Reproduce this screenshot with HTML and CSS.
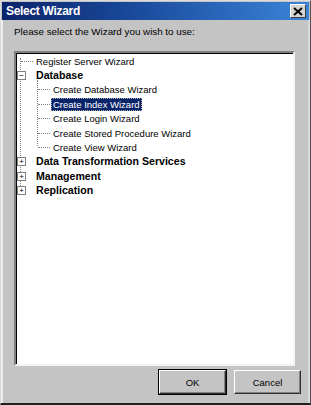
FILE: index.html
```html
<!DOCTYPE html>
<html>
<head>
<meta charset="utf-8">
<link rel="stylesheet" href="styles.css">
</head>
<body>
<div class="window">
  <div class="titlebar">
    <span class="title">Select Wizard</span>
    <span class="close"><svg width="10" height="9" viewBox="0 0 10 9"><path d="M1 1 L9 8 M9 1 L1 8" stroke="#000" stroke-width="2"/></svg></span>
  </div>
  <div class="body">
    <div class="prompt">Please select the Wizard you wish to use:</div>
    <div class="tree">
      <span class="vline root"></span>
      <span class="vline kids"></span>
      <div class="row"><span class="hline"></span><span class="txt">Register Server Wizard</span></div>
      <div class="row"><span class="box">&minus;</span><span class="txt bold">Database</span></div>
      <div class="row child"><span class="hline"></span><span class="txt">Create Database Wizard</span></div>
      <div class="row child"><span class="hline"></span><span class="txt sel">Create Index Wizard</span></div>
      <div class="row child"><span class="hline"></span><span class="txt">Create Login Wizard</span></div>
      <div class="row child"><span class="hline"></span><span class="txt">Create Stored Procedure Wizard</span></div>
      <div class="row child"><span class="hline"></span><span class="txt">Create View Wizard</span></div>
      <div class="row"><span class="box">+</span><span class="txt bold">Data Transformation Services</span></div>
      <div class="row"><span class="box">+</span><span class="txt bold">Management</span></div>
      <div class="row"><span class="box">+</span><span class="txt bold">Replication</span></div>
    </div>
    <div class="buttons">
      <button class="btn def">OK</button>
      <button class="btn">Cancel</button>
    </div>
  </div>
</div>
</body>
</html>
```
FILE: styles.css
```css
html, body { margin: 0; padding: 0; }
body { width: 311px; height: 405px; overflow: hidden; background: #c4c4c4; font-family: "Liberation Sans", Arial, sans-serif; font-size: 10px; }
.window { width: 311px; height: 405px; box-sizing: border-box; border-left: 1px solid #dcdcdc; border-top: 1px solid #dcdcdc; border-right: 1px solid #505050; border-bottom: 2px solid #202020; background: #c4c4c4; display: flex; flex-direction: column; }
.titlebar { height: 18px; background: linear-gradient(90deg, #0a246a 0%, #1b4c9e 45%, #3a84d8 100%); display: flex; align-items: center; justify-content: space-between; padding: 0 3px 0 4px; margin: 1px 1px 0 1px; }
.title { color: #fff; font-weight: bold; font-size: 12px; letter-spacing: -0.3px; }
.close { width: 16px; height: 14px; background: #d4d4d4; border: 1px solid; border-color: #fff #404040 #404040 #fff; box-sizing: border-box; display: flex; align-items: center; justify-content: center; }
.body { flex: 1; display: flex; flex-direction: column; padding: 0 13px 8px 11px; border-left: 2px solid #ececec; border-right: 2px solid #dadada; }
.prompt { margin-top: 5px; height: 14px; line-height: 14px; font-size: 9.8px; color: #000; }
.tree { margin-top: 12px; height: 315px; background: #fff; border: 2px solid; border-color: #808080 #f4f4f4 #f4f4f4 #808080; box-shadow: inset 1px 1px 0 #000; padding: 1px 0 0 1px; box-sizing: border-box; position: relative; }
.vline { position: absolute; border-left: 1px dotted #808080; }
.vline.root { left: 4px; top: 5px; height: 132px; }
.vline.kids { left: 21px; top: 27px; height: 66px; }
.row { height: 14.4px; display: flex; align-items: center; position: relative; }
.box { width: 7px; height: 7px; border: 1px solid #808080; font-size: 8px; line-height: 7px; text-align: center; margin-left: 0; margin-right: 8px; color: #000; background: #fff; position: relative; z-index: 1; }
.hline { width: 12px; border-top: 1px dotted #808080; margin-left: 4px; margin-right: 1px; }
.child .hline { margin-left: 21px; }
.txt { color: #000; padding: 0 2px; line-height: 13px; font-size: 9.5px; }
.bold { font-weight: bold; font-size: 10.6px; }
.sel { background: #0a246a; color: #fff; outline: 1px dotted #aaa; outline-offset: -1px; }
.buttons { display: flex; justify-content: flex-end; gap: 8px; margin-top: 4px; margin-right: -6px; }
.btn { width: 67px; height: 24px; background: #c4c4c4; font-family: "Liberation Sans", Arial, sans-serif; font-size: 9.5px; color: #000; border: 1px solid; border-color: #fff #303030 #303030 #fff; box-shadow: inset -1px -1px 0 #808080; padding: 0; }
.btn.def { outline: 1px solid #000; }
```
